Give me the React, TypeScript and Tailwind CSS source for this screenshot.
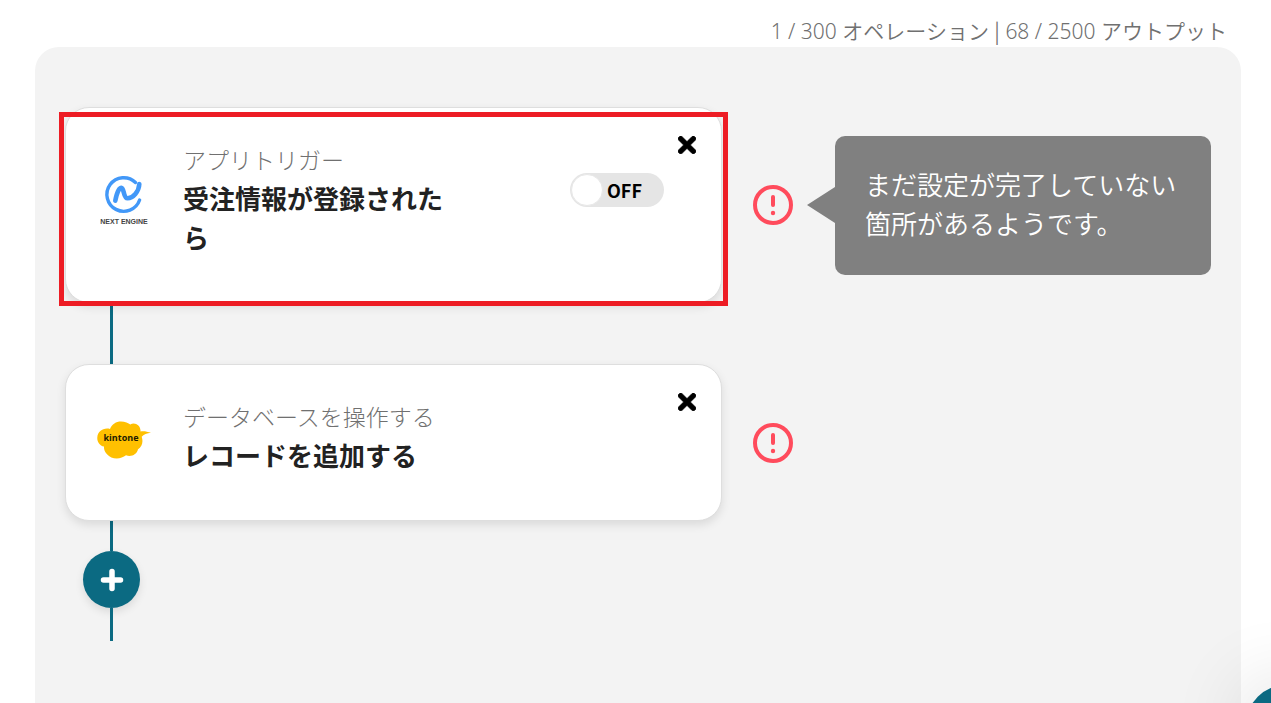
import { useState } from 'react';
import type { ReactNode } from 'react';

interface StepCardProps {
  logo: ReactNode;
  label: string;
  title: string;
  highlighted?: boolean;
  toggle?: ReactNode;
}

const NextEngineLogo = () => (
  <svg viewBox="0 2 54 54" className="w-[54px] h-[54px]" role="img" aria-label="NEXT ENGINE">
    <g fill="none" stroke="#4298f8" strokeLinecap="round" strokeLinejoin="round">
      <path d="M38.5 9.500A16.8 16.8 0 1 0 42.6 27" strokeWidth="3.4" />
      <path
        d="M18.3 27.7C19.6 20.5 22 14.7 24.4 14.7C27.2 14.7 26.2 25.3 30.6 25.3C36 25.3 42 18.5 42.3 11"
        strokeWidth="4.6"
      />
    </g>
    <text
      x="27"
      y="51"
      textAnchor="middle"
      fontSize="7"
      fontWeight="700"
      fill="#444444"
      fontFamily="'Liberation Sans', sans-serif"
    >
      NEXT ENGINE
    </text>
  </svg>
);

const KintoneLogo = () => (
  <svg viewBox="0 0 54 38" className="w-[54px] h-[38px]" role="img" aria-label="kintone">
    <path
      d="M13 8C15 3 19 0.500 24 0.500C28 0.500 31.500 2 33.300 3.500C37.500 0.500 44 4 43.500 10.500C46 9.800 50 10.300 54 11.800C50 12.300 46.500 13.500 44.700 15.700C46.500 21 45 26 41 28.300C40 33.500 34 36.500 29 34.300C24 38.500 14.500 38.800 10 33.300C7.500 30.500 6.800 28 7 25.500C2.500 24.500 0 20.500 0.300 16.500C0.600 10.500 6.500 6.300 13 8Z"
      fill="#ffc000"
    />
    <text
      x="24"
      y="20"
      textAnchor="middle"
      fontSize="9"
      fontWeight="700"
      fill="#221a00"
      fontFamily="'Open Sans', sans-serif"
    >
      kintone
    </text>
  </svg>
);

const CloseIcon = () => (
  <svg viewBox="0 80 352 352" className="w-[18px] h-[18px]" fill="currentColor" aria-hidden="true">
    <path
      d="M242.72 256l100.07-100.07c12.28-12.28 12.28-32.19 0-44.48l-22.24-22.24c-12.28-12.28-32.19-12.28-44.48 0L176 189.28 75.93 89.21c-12.28-12.28-32.19-12.28-44.48 0L9.21 111.45c-12.28 12.28-12.28 32.19 0 44.48L109.28 256 9.21 356.07c-12.28 12.28-12.28 32.19 0 44.48l22.24 22.24c12.28 12.28 32.2 12.28 44.48 0L176 322.72l100.07 100.07c12.28 12.28 32.2 12.28 44.48 0l22.24-22.24c12.28-12.28 12.28-32.19 0-44.48L242.72 256z"
      stroke="currentColor"
      strokeWidth="14"
    />
  </svg>
);

const AlertIcon = () => (
  <svg viewBox="0 0 40 40" className="w-10 h-10" role="img" aria-label="エラー">
    <circle cx="20" cy="20" r="18" fill="none" stroke="#ff4b5c" strokeWidth="4" />
    <path d="M20 12v8" stroke="#ff4b5c" strokeWidth="4" strokeLinecap="round" />
    <circle cx="20" cy="28" r="2.200" fill="#ff4b5c" />
  </svg>
);

const PowerToggle = () => {
  const [on, setOn] = useState(false);

  return (
    <label className="mt-[37px] flex h-[34px] w-[94px] cursor-pointer items-center gap-1 rounded-full bg-[#e5e5e5] px-px">
      <input
        type="checkbox"
        checked={on}
        onChange={(e) => setOn(e.target.checked)}
        className="h-8 w-8 shrink-0 cursor-pointer appearance-none rounded-full border border-[#e8e8e8] bg-white checked:order-last"
      />
      <span className="text-lg font-bold text-black">{on ? 'ON' : 'OFF'}</span>
    </label>
  );
};

const StepCard = ({ logo, label, title, highlighted, toggle }: StepCardProps) => (
  <div className="relative">
    <div className="flex items-start rounded-[24px] border border-[#dedede] bg-white pt-7 pr-[25px] pb-[39px] pl-[31px] shadow-[0_4px_10px_rgba(0,0,0,0.1)]">
      <div className="mt-[5px] flex items-center gap-8">
        <div className="w-[54px] shrink-0">{logo}</div>
        <div className="w-[280px] pb-[7px]">
          <p className="text-[23px] leading-[37px] font-light text-[#707070]">{label}</p>
          <h2 className="text-[26px] leading-[39px] font-bold text-[#222222]">{title}</h2>
        </div>
      </div>
      <div className="ml-auto flex items-start gap-[14px]">
        {toggle}
        <button type="button" aria-label="削除" className="cursor-pointer text-black">
          <CloseIcon />
        </button>
      </div>
    </div>
    {highlighted && (
      <div className="pointer-events-none absolute -inset-x-[6px] top-[5px] -bottom-[3px] border-[5px] border-[#ed1c24]" />
    )}
  </div>
);

const Connector = ({ className }: { className: string }) => (
  <div className={`ml-[45px] w-[3px] bg-[#0b6a82] ${className}`} />
);

export default function App() {
  return (
    <div className="flex min-h-screen flex-col bg-white pr-[30px] pl-[35px] font-['Noto_Sans_CJK_JP',sans-serif]">
      <header className="pt-[14px] pr-[14px] text-right font-['Noto_Sans','Noto_Sans_CJK_JP',sans-serif] text-[21px] leading-8 font-[350] text-[#707070]">
        1 / 300 オペレーション <span className="font-['Noto_Sans_CJK_JP',sans-serif]">|</span> 68 / 2500 アウトプット
      </header>

      <main className="flex-1 rounded-t-[24px] bg-[#f3f3f3] px-[30px] pt-[60px] pb-[62px]">
        {/* Trigger */}
        <div className="grid grid-cols-[minmax(0,1fr)_85px_404px] items-center">
          <StepCard
            logo={<NextEngineLogo />}
            label="アプリトリガー"
            title="受注情報が登録されたら"
            highlighted
            toggle={<PowerToggle />}
          />
          <div className="flex justify-end pr-[14px]">
            <AlertIcon />
          </div>
          <div className="flex items-center">
            <svg viewBox="0 0 28 36" className="h-9 w-7 shrink-0" aria-hidden="true">
              <path d="M0 18L28 0V36Z" fill="#808080" />
            </svg>
            <p className="flex-1 rounded-[10px] bg-[#808080] px-[30px] pt-7 pb-[33px] text-[26px] leading-[39px] font-[350] text-white">
              まだ設定が完了していない箇所があるようです。
            </p>
          </div>
        </div>

        <Connector className="h-[61px]" />

        {/* Action */}
        <div className="grid grid-cols-[minmax(0,1fr)_85px_404px] items-center">
          <StepCard logo={<KintoneLogo />} label="データベースを操作する" title="レコードを追加する" />
          <div className="flex justify-end pr-[14px]">
            <AlertIcon />
          </div>
        </div>

        <Connector className="h-[30px]" />
        <button
          type="button"
          aria-label="追加"
          className="ml-[18px] flex h-[57px] w-[57px] cursor-pointer items-center justify-center rounded-full bg-[#0b6a82] shadow-[0_4px_8px_rgba(0,0,0,0.1)]"
        >
          <svg viewBox="0 0 24 24" className="h-6 w-6" aria-hidden="true">
            <path d="M12 3.500v17M3.500 12h17" stroke="white" strokeWidth="5.500" strokeLinecap="round" />
          </svg>
        </button>
        <Connector className="h-[33px]" />
      </main>

      {/* Floating help button, peeking in from the corner */}
      <button
        type="button"
        aria-label="ヘルプ"
        className="fixed -right-[55px] -bottom-[62px] h-20 w-20 cursor-pointer rounded-full bg-[#0b6a82] shadow-[0_0_80px_rgba(0,0,0,0.16)]"
      />
    </div>
  );
}
